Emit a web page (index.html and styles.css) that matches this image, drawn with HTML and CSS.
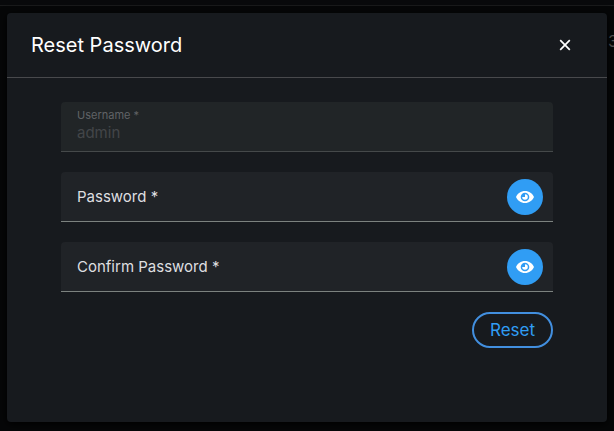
FILE: index.html
```html
<!DOCTYPE html>
<html lang="en">
<head>
<meta charset="utf-8">
<meta name="viewport" content="width=device-width, initial-scale=1">
<title>Reset Password</title>
<link rel="stylesheet" href="styles.css">
</head>
<body>
<div class="page" aria-hidden="true">
  <div class="page-bar"></div>
  <div class="page-count">3</div>
</div>
<main class="dialog" role="dialog" aria-labelledby="dialog-title">
  <header class="dialog-header">
    <h1 class="dialog-title" id="dialog-title">Reset Password</h1>
    <button class="close" type="button" aria-label="Close">
      <svg width="12" height="12" viewBox="0 0 12 12"><path d="M1.2 1.2 10.8 10.8M10.8 1.2 1.2 10.8" fill="none" stroke="currentColor" stroke-width="1.7"/></svg>
    </button>
  </header>
  <form class="form">
    <div class="field field-filled">
      <label class="label-small" for="username">Username *</label>
      <input class="input" id="username" type="text" value="admin" disabled>
    </div>
    <div class="field">
      <label class="label" for="password">Password *</label>
      <input class="input" id="password" type="password">
      <button class="reveal" type="button" aria-label="Show password">
        <svg width="18" height="14" viewBox="0 0 18 14"><path fill="currentColor" fill-rule="evenodd" d="M0 7C1.6 3.4 4.8 1 9 1s7.400 2.400 9 6c-1.600 3.600-4.800 6-9 6S1.600 10.600 0 7ZM9 2.700a4.300 4.300 0 1 0 0 8.600 4.300 4.300 0 0 0 0-8.600Z"/><path fill="currentColor" d="M9 4.200V7H6.200A2.800 2.800 0 1 0 9 4.200Z"/></svg>
      </button>
    </div>
    <div class="field">
      <label class="label" for="confirm">Confirm Password *</label>
      <input class="input" id="confirm" type="password">
      <button class="reveal" type="button" aria-label="Show confirmed password">
        <svg width="18" height="14" viewBox="0 0 18 14"><path fill="currentColor" fill-rule="evenodd" d="M0 7C1.6 3.4 4.8 1 9 1s7.400 2.400 9 6c-1.600 3.600-4.800 6-9 6S1.600 10.600 0 7ZM9 2.700a4.300 4.300 0 1 0 0 8.600 4.300 4.300 0 0 0 0-8.600Z"/><path fill="currentColor" d="M9 4.200V7H6.200A2.800 2.800 0 1 0 9 4.200Z"/></svg>
      </button>
    </div>
    <button class="submit" type="button">Reset</button>
  </form>
</main>
</body>
</html>
```
FILE: styles.css
```css
* {
  box-sizing: border-box;
}

body {
  margin: 0;
  min-height: 100vh;
  display: flex;
  padding: 13px 7px 9px;
  overflow: hidden;
  background: #060708;
  color: #fff;
  font-family: Inter, "Liberation Sans", sans-serif;
  font-size: 15px;
}

.page {
  position: absolute;
  inset: 0;
  overflow: hidden;
}

.page-bar {
  height: 6px;
  background: #08090b;
  border-bottom: 1px solid #191a1b;
}

.page-count {
  position: absolute;
  top: 31px;
  right: -4px;
  color: #585858;
  font-size: 16px;
  line-height: 20px;
}

.dialog {
  position: relative;
  flex: 1;
  border-radius: 4px;
  background: #171a1e;
  box-shadow: 0 2px 8px #000;
}

.dialog-header {
  display: flex;
  align-items: center;
  justify-content: space-between;
  height: 65px;
  padding: 0 24px;
  border-bottom: 1px solid #48494c;
}

.dialog-title {
  margin: 0;
  font-size: 20px;
  line-height: 24px;
  font-weight: 400;
}

.close {
  display: grid;
  place-items: center;
  width: 36px;
  height: 36px;
  padding: 0;
  border: 0;
  background: none;
  color: #fff;
}

.form {
  display: flex;
  flex-direction: column;
  gap: 20px;
  padding: 24px 54px;
}

.field {
  display: flex;
  align-items: center;
  height: 50px;
  padding: 0 10px 0 16px;
  border-bottom: 1px solid #7c827f;
  border-radius: 4px 4px 0 0;
  background: #202327;
}

.field-filled {
  flex-direction: column;
  align-items: stretch;
  justify-content: flex-start;
  padding-top: 5px;
  border-color: #45494a;
  background: #212527;
}

.label {
  color: #dedfe0;
  line-height: 20px;
}

.label-small {
  color: #606366;
  font-size: 11px;
  line-height: 16px;
}

.input {
  flex: 1;
  min-width: 0;
  padding: 0;
  border: 0;
  outline: 0;
  background: none;
  color: #fff;
  font: inherit;
  line-height: 20px;
}

.field-filled .input {
  flex: none;
  height: 20px;
  color: #434649;
}

.reveal {
  display: grid;
  place-items: center;
  width: 36px;
  height: 36px;
  padding: 0;
  border: 0;
  border-radius: 50%;
  background: #309df4;
  color: #fff;
}

.submit {
  align-self: flex-end;
  height: 36px;
  padding: 0 16px;
  border: 2px solid #428fdf;
  border-radius: 18px;
  background: none;
  color: #309df4;
  font-family: inherit;
  font-size: 17px;
}
```
